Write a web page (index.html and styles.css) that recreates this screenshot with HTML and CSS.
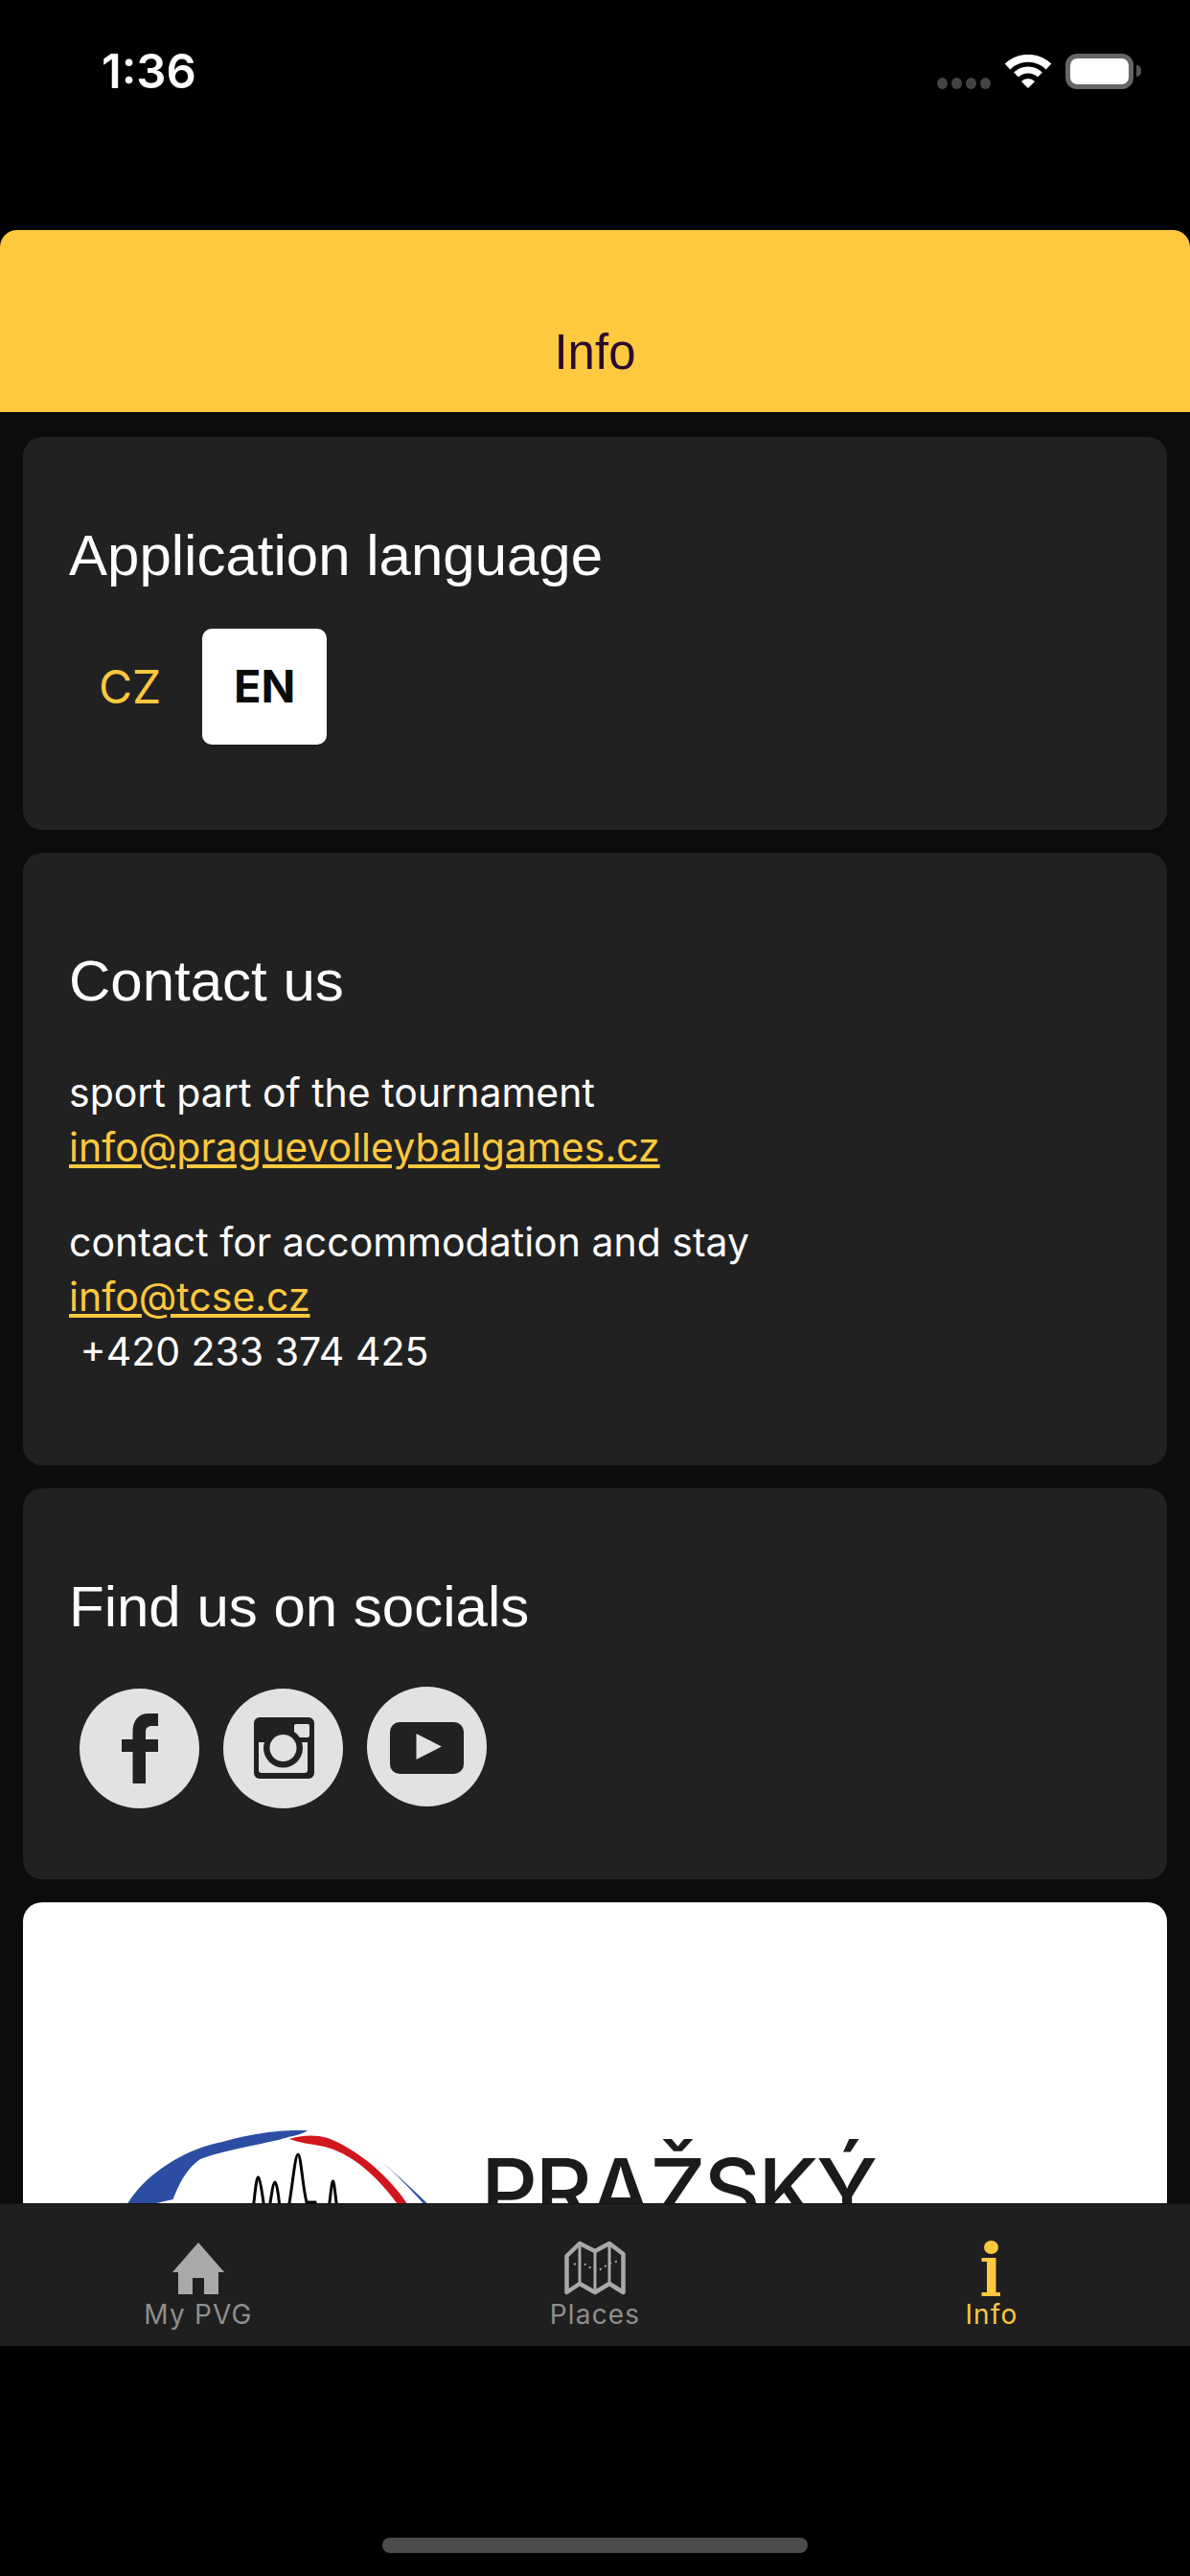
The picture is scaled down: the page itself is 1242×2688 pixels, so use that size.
FILE: index.html
```html
<!DOCTYPE html>
<html lang="en">
<head>
<meta charset="utf-8">
<title>Info</title>
<link rel="stylesheet" href="styles.css">
</head>
<body>
<div class="phone">
  <div class="status">
    <span class="time">1:36</span>
    <div class="status-icons">
      <div class="signal"><i></i><i></i><i></i><i></i></div>
      <svg class="wifi" viewBox="0 0 50 36">
        <path d="M25 35 17.9 27.9A10 10 0 0 1 32.1 27.9Z" fill="#fff"/>
        <path d="M12.5 21A18 18 0 0 1 37.5 21" fill="none" stroke="#fff" stroke-width="7"/>
        <path d="M3.5 12.5A31 31 0 0 1 46.5 12.5" fill="none" stroke="#fff" stroke-width="8"/>
      </svg>
      <div class="battery"><div class="battery-fill"></div></div>
      <div class="battery-cap"></div>
    </div>
  </div>
  <header class="title-bar"><h1 class="title">Info</h1></header>
  <main class="content">
    <section class="card card-lang">
      <h2 class="card-title">Application language</h2>
      <div class="langs">
        <span class="lang">CZ</span>
        <span class="lang lang-active">EN</span>
      </div>
    </section>
    <section class="card card-contact">
      <h2 class="card-title">Contact us</h2>
      <p class="para">sport part of the tournament<br><a class="link" href="#">info@praguevolleyballgames.cz</a></p>
      <p class="para">contact for accommodation and stay<br><a class="link" href="#">info@tcse.cz</a><br>&nbsp;+420 233 374 425</p>
    </section>
    <section class="card card-social">
      <h2 class="card-title">Find us on socials</h2>
      <div class="socials">
        <svg class="social" viewBox="0 0 125 125">
          <circle cx="62.5" cy="62.5" r="62.5" fill="#e2e2e2"/>
          <path d="M55.5 99V66H44V53H55.5V45C55.5 33 62 26 72 26H82V39H76C71 39 69 41 69 46V53H82V66H69V99Z" fill="#212121"/>
        </svg>
        <svg class="social" viewBox="0 0 125 125">
          <circle cx="62.5" cy="62.5" r="62.5" fill="#e2e2e2"/>
          <rect x="32" y="30" width="63" height="64" rx="6" fill="#212121"/>
          <rect x="74" y="37" width="16" height="14" rx="2" fill="#e2e2e2"/>
          <path d="M37 56H88V85C88 87 87 88 85 88H40C38 88 37 87 37 85Z" fill="#e2e2e2"/>
          <circle cx="62.500" cy="62" r="20.500" fill="#212121"/>
          <circle cx="62.500" cy="62" r="14" fill="#e2e2e2"/>
        </svg>
        <svg class="social social-raised" viewBox="0 0 125 125">
          <circle cx="62.5" cy="62.5" r="62.5" fill="#e2e2e2"/>
          <rect x="24" y="37" width="77" height="54" rx="10" fill="#212121"/>
          <path d="M51.500 49 78 62.500 51.500 76Z" fill="#e2e2e2"/>
        </svg>
      </div>
    </section>
    <section class="card card-logo">
      <svg class="logo" viewBox="0 0 1194 420">
        <path d="M107 80C123 50 165 20 208 12C240 3 270 -1 297 0C290 5 280 6 277 7C250 15 210 20 185 30C170 40 162 58 156.500 72L135 77 130 80Z" fill="#2b4ea3"/>
        <path d="M278 9C290 5 305 4 318 8C350 20 385 50 403 80L393 80C372 50 345 25 315 17C300 14 288 13 278 9Z" fill="#d2161e"/>
        <path d="M363 24C385 40 410 65 426 80L421 80C405 62 385 40 363 24Z" fill="#2b4ea3"/>
        <path d="M240 82C242 70 243 50 245.500 49C248 50 250 70 252 82M257 82C259 70 261 54 263 54C265 54 267 70 268 82M277 82C281 60 284 25 287 25C290 25 292 60 296 75H305L307 82M319 82C321 70 322 53 323.500 53C325 53 326 70 328 82" fill="none" stroke="#000" stroke-width="3"/>
        <text class="logo-word" x="478" y="96" textLength="414">PRAŽSKÝ</text>
      </svg>
    </section>
  </main>
  <nav class="tabs">
    <a class="tab" href="#">
      <svg class="tab-icon" viewBox="0 0 64 56">
        <path d="M32 1 59 32H53V55H38V38H26V55H11V32H5Z" fill="#a9a9a9"/>
      </svg>
      <span class="tab-label">My PVG</span>
    </a>
    <a class="tab" href="#">
      <svg class="tab-icon" viewBox="0 0 64 56">
        <path d="M2.500 15 16 2 32 10 47 2 61.500 13V53L47 44 32 53 16 44 2.500 53Z" fill="none" stroke="#a9a9a9" stroke-width="4.500" stroke-linejoin="round"/>
        <path d="M16 2V44M32 10V53M47 2V44" fill="none" stroke="#a9a9a9" stroke-width="3"/>
        <path d="M10 24 16 21 22 24 28 28 36 30 42 26 50 22 58 20" fill="none" stroke="#a9a9a9" stroke-width="2" stroke-dasharray="2 4"/>
      </svg>
      <span class="tab-label">Places</span>
    </a>
    <a class="tab tab-active" href="#">
      <svg class="tab-icon" viewBox="0 0 64 56">
        <ellipse cx="31.500" cy="6" rx="7.500" ry="7" fill="#fcc83f"/>
        <path d="M21.500 17H36.500V53H41V57H21.500V53H27V21H21.500Z" fill="#fcc83f"/>
      </svg>
      <span class="tab-label">Info</span>
    </a>
  </nav>
  <div class="home-area"><div class="home-bar"></div></div>
</div>
</body>
</html>
```
FILE: styles.css
```css
* { box-sizing: border-box; }
html, body { margin: 0; padding: 0; background: #000; }
.phone { width: 1242px; height: 2688px; display: flex; flex-direction: column; background: #000; overflow: hidden; }

.status { height: 240px; flex: none; display: flex; justify-content: space-between; align-items: flex-start; padding: 0 51px 0 106px; }
.time { font: 600 49px/54px Inter, "Liberation Sans", sans-serif; color: #fff; margin-top: 48px; }
.status-icons { display: flex; align-items: flex-start; margin-top: 56px; }
.signal { display: flex; gap: 4px; margin-top: 25px; margin-right: 14px; }
.signal i { display: block; width: 11px; height: 12px; border-radius: 50%; background: #444; }
.wifi { width: 50px; height: 36px; margin-top: 1px; margin-right: 14px; }
.battery { width: 71px; height: 37px; border: 5px solid #666; border-radius: 12px; }
.battery-fill { width: 100%; height: 100%; background: #fff; border-radius: 7px; }
.battery-cap { width: 5px; height: 12px; margin: 12px 0 0 3px; background: #555; border-radius: 0 6px 6px 0; }

.title-bar { height: 190px; flex: none; background: #fec93f; border-radius: 18px 18px 0 0; display: flex; justify-content: center; }
.title { margin: 100px 0 0; font: 400 51px/56px "Liberation Sans", Arial, sans-serif; color: #2a0a2c; }

.content { flex: none; height: 1869px; overflow: hidden; background: #0c0c0c; padding: 26px 24px 0; display: flex; flex-direction: column; gap: 24px; }
.card { flex: none; background: #212121; border-radius: 20px; padding: 0 48px; color: #fff; }
.card-title { margin: 0; font: 400 60px/68px "Liberation Sans", Arial, sans-serif; color: #fff; }

.card-lang { height: 410px; padding-top: 90px; }
.langs { display: flex; align-items: center; margin-top: 42px; gap: 43px; }
.lang { font: 400 48px/58px Inter, sans-serif; color: #fcc83f; padding: 32px 0 31px 31px; }
.lang-active { width: 130px; padding: 31px 0 32px; background: #fff; color: #0a0a0a; font-size: 47px; font-weight: 700; border-radius: 10px; text-align: center; }

.card-contact { height: 639px; padding-top: 100px; }
.para { margin: 0; font: 400 41px/57px Inter, "Liberation Sans", sans-serif; color: #fff; }
.card-title + .para { margin-top: 54px; }
.para + .para { margin-top: 42px; }
.link { color: #fcc83f; text-decoration: underline; }

.card-social { height: 408px; padding-top: 90px; }
.socials { display: flex; align-items: flex-start; margin: 51px 0 0 11px; gap: 25px; }
.social { width: 125px; height: 125px; display: block; }
.social-raised { margin-top: -2px; }

.card-logo { height: 700px; background: #fff; padding: 0; }
.logo { display: block; width: 1194px; height: 420px; margin-top: 238px; overflow: hidden; }
.logo-word { font: 500 92px Inter, sans-serif; fill: #1d1a1a; }

.tabs { height: 149px; flex: none; display: flex; background: #1f1f1f; border-top: 1px solid #111; }
.tab { flex: 1; display: flex; flex-direction: column; align-items: center; padding-top: 39px; color: #8e8e8e; text-decoration: none; }
.tab-icon { width: 64px; height: 56px; display: block; overflow: visible; }
.tab-label { font: 400 28px/34px Inter, sans-serif; letter-spacing: 1.2px; margin-top: 3px; }
.tab-active { color: #fcc83f; }

.home-area { flex: none; height: 240px; display: flex; align-items: flex-end; justify-content: center; padding-bottom: 24px; }
.home-bar { width: 444px; height: 16px; border-radius: 8px; background: #4c4c4c; }
```
